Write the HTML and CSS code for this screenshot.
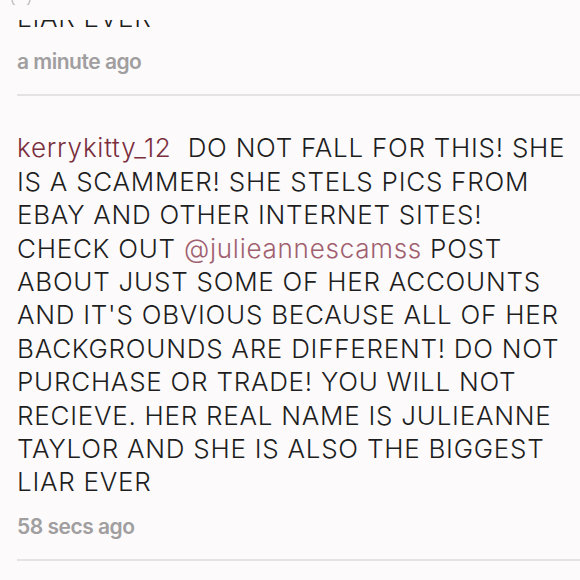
FILE: index.html
```html
<!DOCTYPE html>
<html>
<head>
<meta charset="utf-8">
<link rel="stylesheet" href="styles.css">
</head>
<body>
<div class="screen">
  <div class="header">
    <svg class="arc" width="24" height="6" viewBox="0 0 24 6"><path d="M3 0 A9 9 0 0 0 21 0" fill="none" stroke="#c4c2c3" stroke-width="1.5"/></svg>
    <span class="hd hd1">2</span>
    <span class="hd hd2">87</span>
  </div>
  <div class="item">
    <p class="comment first-comment">LIAR EVER</p>
    <p class="time">a minute ago</p>
  </div>
  <div class="item">
    <p class="comment main"><span class="user">kerrykitty_12</span> DO NOT FALL FOR THIS! SHE<br>IS A SCAMMER! SHE STELS PICS FROM<br>EBAY AND OTHER INTERNET SITES!<br>CHECK OUT <span class="mention">@julieannescamss</span> POST<br>ABOUT JUST SOME OF HER ACCOUNTS<br>AND IT'S OBVIOUS BECAUSE ALL OF HER<br>BACKGROUNDS ARE DIFFERENT! DO NOT<br>PURCHASE OR TRADE! YOU WILL NOT<br>RECIEVE. HER REAL NAME IS JULIEANNE<br>TAYLOR AND SHE IS ALSO THE BIGGEST<br>LIAR EVER</p>
    <p class="time">58 secs ago</p>
  </div>
</div>
</body>
</html>
```
FILE: styles.css
```css
html, body {
  margin: 0;
  padding: 0;
  background: #fcfafb;
}
.screen {
  position: relative;
  width: 580px;
  height: 580px;
  overflow: hidden;
  background: #fcfafb;
  font-family: Inter, "Liberation Sans", sans-serif;
}
.header {
  position: absolute;
  top: 0;
  left: 0;
  right: 0;
  height: 20px;
  background: #fcfafb;
  overflow: hidden;
}
.arc {
  position: absolute;
  left: 9px;
  top: -1px;
}
.hd {
  position: absolute;
  top: -19px;
  font-size: 22px;
  line-height: 22px;
  font-weight: 600;
  color: #8a8889;
}
.hd1 { left: 486px; }
.hd2 { left: 539px; }
.item {
  margin-left: 17px;
  border-bottom: 2px solid #e4e2e3;
}
.comment {
  margin: 0;
  font-size: 26px;
  line-height: 33.4px;
  letter-spacing: 0.75px;
  font-weight: 350;
  color: #1e1e1e;
  white-space: nowrap;
}
.first-comment {
  margin-top: 1px;
}
.main {
  padding-top: 35px;
}
.user {
  color: #7a2f3d;
  margin-right: 8px;
}
.mention {
  color: #a0606f;
}
.time {
  margin: 0;
  padding: 15px 0 19px;
  font-size: 21px;
  line-height: 26px;
  letter-spacing: -0.5px;
  font-weight: 600;
  color: #a09e9f;
}
```
